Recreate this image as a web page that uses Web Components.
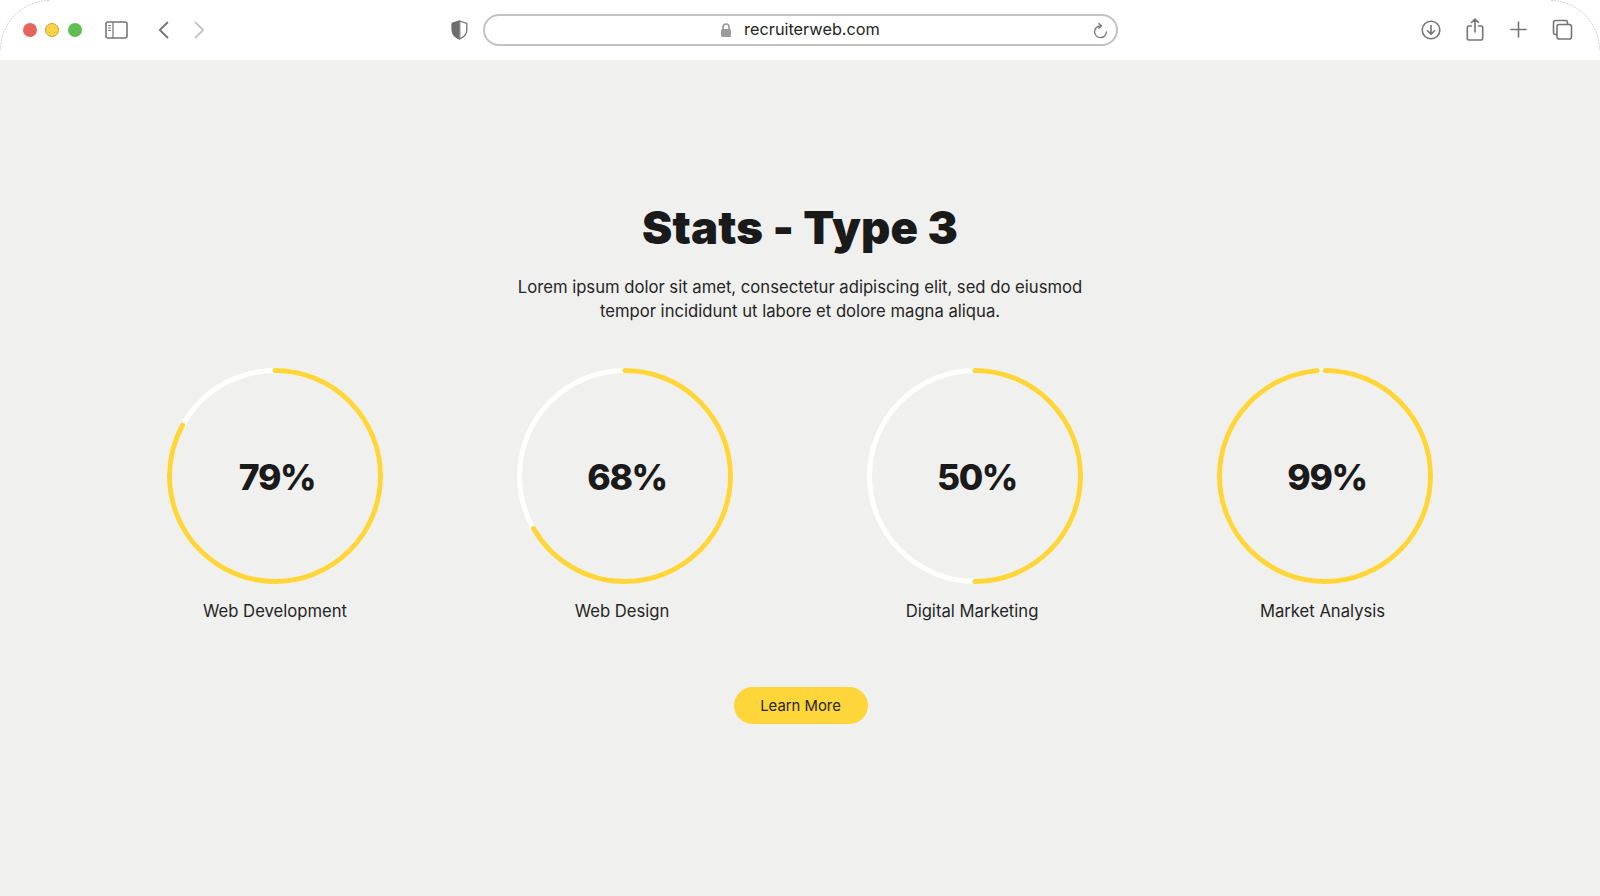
<!DOCTYPE html>
<html>
<head>
<meta charset="utf-8">
<title>Stats - Type 3</title>
<style>
  html, body { margin: 0; height: 100%; }
  body { background: #f0f0ee; color: #1a1a1a; font-family: Inter, "Liberation Sans", sans-serif; overflow: hidden; }
</style>
</head>
<body>
<browser-bar url="recruiterweb.com"></browser-bar>
<stats-section>
  <span slot="title">Stats - Type 3</span>
  <span slot="intro">Lorem ipsum dolor sit amet, consectetur adipiscing elit, sed do eiusmod<br>tempor incididunt ut labore et dolore magna aliqua.</span>
  <stat-ring value="79%" arc="83" nudge="0">Web Development</stat-ring>
  <stat-ring value="68%" arc="66.7" nudge="6">Web Design</stat-ring>
  <stat-ring value="50%" arc="50" nudge="6">Digital Marketing</stat-ring>
  <stat-ring value="99%" arc="98.8" nudge="5">Market Analysis</stat-ring>
  <pill-button slot="action">Learn More</pill-button>
</stats-section>

<script>
const barTemplate = document.createElement('template');
barTemplate.innerHTML = `
  <style>
    :host { display: block; }
    .bar {
      height: 60px; box-sizing: border-box; background: #fff; position: relative; padding-bottom: 1px;
      display: grid; grid-template-columns: 1fr 635px 1fr; align-items: center;
    }
    .corner { position: absolute; top: 0; fill: none; stroke: #bbb; stroke-width: 0.800; stroke-dasharray: 1 2; }
    .corner.tl { left: 0; }
    .corner.tr { right: 0; transform: scaleX(-1); }
    .left, .right { display: flex; align-items: center; height: 100%; }
    .left { padding-left: 23px; }
    .right { justify-content: flex-end; padding-right: 27px; }
    .light { width: 14px; height: 14px; border-radius: 50%; margin-right: 8.300px; box-sizing: border-box; }
    .red { background: #e5645c; }
    .yellow { background: radial-gradient(circle, #d8b036 0.500px, transparent 0.900px) 1px 1px / 5px 5px, #fbd44a; border: 1.500px solid #c9a12c; }
    .green { background: #60bd50; }
    svg { display: block; fill: none; stroke: #757575; stroke-width: 1.600; stroke-linecap: round; stroke-linejoin: round; }
    .url {
      height: 32px; box-sizing: border-box; border: 2px solid #c2c2c2; border-radius: 16px;
      display: flex; align-items: center; justify-content: center; position: relative;
      font-size: 16.300px; color: #252525;
    }
    .url .lock { margin-right: 12px; }
    .url #host { padding-bottom: 1px; }
    .url .reload { position: absolute; right: 8px; top: 7px; }
  </style>
  <div class="bar">
    <div class="left">
      <span class="light red"></span><span class="light yellow"></span><span class="light green"></span>
      <svg style="margin-left:15.500px" width="23" height="18" viewBox="0 0 23 18"><rect x="1" y="1" width="21" height="16" rx="2"/><path d="M8 1v16M3.500 4.500h2M3.500 7h2M3.500 9.500h2" stroke-width="1.200"/></svg>
      <svg style="margin-left:29.500px" width="11" height="18" viewBox="0 0 11 18"><path d="M9.500 1.500L1.800 9l7.700 7.500" stroke-width="1.800"/></svg>
      <svg style="margin-left:25px;stroke:#c4c4c4" width="11" height="18" viewBox="0 0 11 18"><path d="M1.500 1.500L9.200 9l-7.700 7.500" stroke-width="1.800"/></svg>
      <svg style="margin-left:auto;margin-right:15px" width="17" height="20" viewBox="0 0 17 20"><path d="M8.500 1L15.800 3.400V10c0 4.500-3.500 7.400-7.300 9C4.700 17.400 1.200 14.500 1.200 10V3.400z" stroke-width="1.300"/><path d="M8.500 1L1.200 3.400V10c0 4.500 3.500 7.400 7.300 9z" fill="#6e6e6e" stroke="#6e6e6e" stroke-width="1"/></svg>
    </div>
    <div class="url">
      <svg class="lock" width="12" height="14" viewBox="0 0 12 14" style="stroke:none"><path d="M3 6V4a3 3 0 0 1 6 0v2" fill="none" stroke="#9a9a9a" stroke-width="1.700"/><rect x="1" y="6" width="10" height="8" rx="1.500" fill="#9a9a9a"/></svg>
      <span id="host"></span>
      <svg class="reload" width="15" height="16" viewBox="0 0 15 16"><path d="M7.500 2.800A5.900 5.900 0 1 0 13.400 8.800" stroke-width="1.300"/><path d="M5.800 0.600L8.600 2.900 5.800 5.100" stroke-width="1.300"/></svg>
    </div>
    <div class="right">
      <svg width="20" height="20" viewBox="0 0 20 20"><circle cx="10" cy="10" r="8.800"/><path d="M10 5.500v8.500M6.500 10.800L10 14.300l3.500-3.500"/></svg>
      <svg style="margin-left:25px" width="18" height="23" viewBox="0 0 18 23"><path d="M5.500 8H2.800A1.500 1.500 0 0 0 1.300 9.500v11A1.500 1.500 0 0 0 2.800 22h12.400a1.500 1.500 0 0 0 1.500-1.500v-11A1.500 1.500 0 0 0 15.200 8H12.500M9 14V1.500M5.500 4.500L9 1.200l3.500 3.300"/></svg>
      <svg style="margin-left:26px" width="17" height="17" viewBox="0 0 17 17"><path d="M8.500 1v15M1 8.500h15"/></svg>
      <svg style="margin-left:25px" width="21" height="21" viewBox="0 0 21 21"><path d="M4.800 15.500H3.500A2 2 0 0 1 1.500 13.500V3.500a2 2 0 0 1 2-2h10a2 2 0 0 1 2 2v1.300"/><rect x="5" y="5.500" width="14.500" height="14.500" rx="2.300"/></svg>
    </div>
    <svg class="corner tl" width="50" height="50" viewBox="0 0 50 50"><path d="M0.500 50A49.500 49.500 0 0 1 50 0.500"/></svg>
    <svg class="corner tr" width="50" height="50" viewBox="0 0 50 50"><path d="M0.500 50A49.500 49.500 0 0 1 50 0.500"/></svg>
  </div>
`;

class BrowserBar extends HTMLElement {
  constructor() {
    super();
    this.attachShadow({mode: 'open'});
    this.shadowRoot.appendChild(barTemplate.content.cloneNode(true));
  }
  connectedCallback() {
    this.shadowRoot.querySelector('#host').textContent = this.getAttribute('url');
  }
}
customElements.define('browser-bar', BrowserBar);

const sectionTemplate = document.createElement('template');
sectionTemplate.innerHTML = `
  <style>
    :host { display: block; }
    .section { padding: 140px 100px 0; display: flex; flex-direction: column; align-items: center; }
    h1 { margin: 0; font-size: 45.500px; line-height: 56px; letter-spacing: 0.150px; font-weight: 900; text-align: center; color: #1a1a1a; }
    p { margin: 19px 0 0; font-size: 16.650px; line-height: 24px; text-align: center; color: #252525; }
    .rings { margin-top: 45px; width: 100%; display: grid; grid-template-columns: repeat(4, 1fr); }
    .action { margin-top: 64px; padding-left: 1px; }
  </style>
  <div class="section">
    <h1><slot name="title"></slot></h1>
    <p><slot name="intro"></slot></p>
    <div class="rings"><slot></slot></div>
    <div class="action"><slot name="action"></slot></div>
  </div>
`;

class StatsSection extends HTMLElement {
  constructor() {
    super();
    this.attachShadow({mode: 'open'});
    this.shadowRoot.appendChild(sectionTemplate.content.cloneNode(true));
  }
}
customElements.define('stats-section', StatsSection);

const ringTemplate = document.createElement('template');
ringTemplate.innerHTML = `
  <style>
    :host { display: flex; flex-direction: column; align-items: center; }
    .ring { width: 216px; height: 216px; position: relative; display: grid; place-items: center; }
    svg { position: absolute; inset: 0; transform: rotate(-90deg); }
    circle { fill: none; stroke-width: 5; }
    .track { stroke: #fff; }
    .arc { stroke: #ffd639; stroke-linecap: round; }
    .value { font-size: 35.500px; letter-spacing: -1.400px; font-weight: 800; color: #1a1a1a; position: relative; padding: 2px 0 0 4px; }
    .label { margin-top: 15px; font-size: 16.650px; line-height: 24px; color: #252525; }
  </style>
  <div class="ring">
    <svg width="216" height="216" viewBox="0 0 216 216">
      <circle class="track" cx="108" cy="108" r="105.500"/>
      <circle class="arc" cx="108" cy="108" r="105.500" pathLength="100"/>
    </svg>
    <span class="value"></span>
  </div>
  <div class="label"><slot></slot></div>
`;

class StatRing extends HTMLElement {
  constructor() {
    super();
    this.attachShadow({mode: 'open'});
    this.shadowRoot.appendChild(ringTemplate.content.cloneNode(true));
  }
  connectedCallback() {
    let arc = parseFloat(this.getAttribute('arc'));
    this.shadowRoot.querySelector('.arc').setAttribute('stroke-dasharray', arc + ' 100');
    this.shadowRoot.querySelector('.value').textContent = this.getAttribute('value');
    this.shadowRoot.querySelector('.label').style.paddingRight = this.getAttribute('nudge') + 'px';
  }
}
customElements.define('stat-ring', StatRing);

const buttonTemplate = document.createElement('template');
buttonTemplate.innerHTML = `
  <style>
    :host { display: inline-block; }
    button {
      width: 134px; height: 37px; border: 0; border-radius: 19px; background: #ffd639; color: #252525;
      font: 400 14.850px Inter, "Liberation Sans", sans-serif; padding: 0; display: block;
    }
  </style>
  <button><slot></slot></button>
`;

class PillButton extends HTMLElement {
  constructor() {
    super();
    this.attachShadow({mode: 'open'});
    this.shadowRoot.appendChild(buttonTemplate.content.cloneNode(true));
  }
}
customElements.define('pill-button', PillButton);
</script>
</body>
</html>
